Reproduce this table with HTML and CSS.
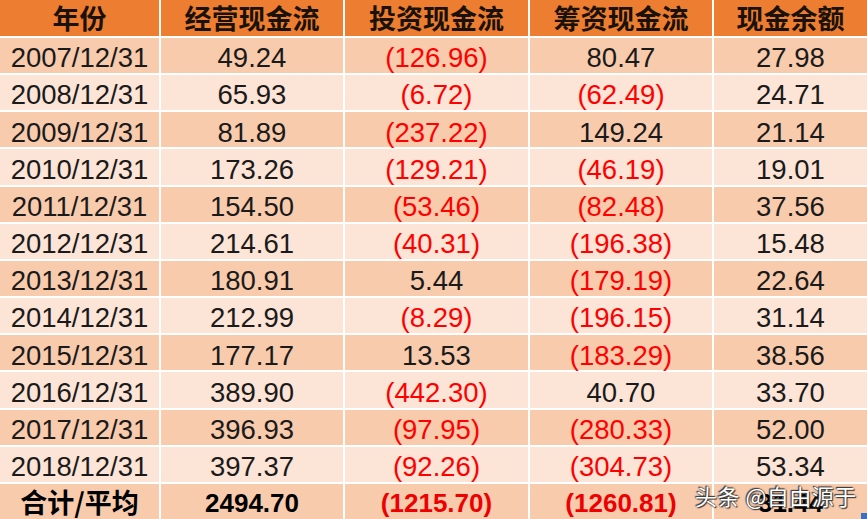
FILE: index.html
```html
<!DOCTYPE html>
<html lang="zh">
<head>
<meta charset="utf-8">
<link rel="stylesheet" href="styles.css">
</head>
<body>
<div class="sheet">
  <div class="grid">
    <div class="c h">年份</div><div class="c h">经营现金流</div><div class="c h">投资现金流</div><div class="c h">筹资现金流</div><div class="c h">现金余额</div>

    <div class="c d">2007/12/31</div><div class="c d">49.24</div><div class="c d neg">(126.96)</div><div class="c d">80.47</div><div class="c d">27.98</div>
    <div class="c l">2008/12/31</div><div class="c l">65.93</div><div class="c l neg">(6.72)</div><div class="c l neg">(62.49)</div><div class="c l">24.71</div>
    <div class="c d">2009/12/31</div><div class="c d">81.89</div><div class="c d neg">(237.22)</div><div class="c d">149.24</div><div class="c d">21.14</div>
    <div class="c l">2010/12/31</div><div class="c l">173.26</div><div class="c l neg">(129.21)</div><div class="c l neg">(46.19)</div><div class="c l">19.01</div>
    <div class="c d">2011/12/31</div><div class="c d">154.50</div><div class="c d neg">(53.46)</div><div class="c d neg">(82.48)</div><div class="c d">37.56</div>
    <div class="c l">2012/12/31</div><div class="c l">214.61</div><div class="c l neg">(40.31)</div><div class="c l neg">(196.38)</div><div class="c l">15.48</div>
    <div class="c d">2013/12/31</div><div class="c d">180.91</div><div class="c d">5.44</div><div class="c d neg">(179.19)</div><div class="c d">22.64</div>
    <div class="c l">2014/12/31</div><div class="c l">212.99</div><div class="c l neg">(8.29)</div><div class="c l neg">(196.15)</div><div class="c l">31.14</div>
    <div class="c d">2015/12/31</div><div class="c d">177.17</div><div class="c d">13.53</div><div class="c d neg">(183.29)</div><div class="c d">38.56</div>
    <div class="c l">2016/12/31</div><div class="c l">389.90</div><div class="c l neg">(442.30)</div><div class="c l">40.70</div><div class="c l">33.70</div>
    <div class="c d">2017/12/31</div><div class="c d">396.93</div><div class="c d neg">(97.95)</div><div class="c d neg">(280.33)</div><div class="c d">52.00</div>
    <div class="c l">2018/12/31</div><div class="c l">397.37</div><div class="c l neg">(92.26)</div><div class="c l neg">(304.73)</div><div class="c l">53.34</div>

    <div class="c d t cjk">合计/平均</div><div class="c d t">2494.70</div><div class="c d t neg">(1215.70)</div><div class="c d t neg">(1260.81)</div><div class="c d t">31.44</div>
  </div>
  <div class="mark">头条 @自由源于</div>
  <div class="corner"></div>
</div>
</body>
</html>
```

FILE: styles.css
```css
html, body {
  margin: 0;
  padding: 0;
  background: #ffffff;
}
.sheet {
  position: relative;
  width: 867px;
  height: 519px;
  overflow: hidden;
}
.grid {
  display: grid;
  grid-template-columns: 159px 182px 183px 182px 1fr;
  grid-template-rows: 36px repeat(13, minmax(0, 1fr));
  column-gap: 2px;
  row-gap: 2px;
  height: 519px;
  background: #ffffff;
}
.c {
  display: flex;
  align-items: center;
  justify-content: center;
  font-family: "Liberation Sans", Arial, "Noto Sans CJK SC", sans-serif;
  font-size: 27.5px;
  line-height: 1;
  color: #1a1a1a;
  white-space: nowrap;
  padding-top: 5px;
  box-sizing: border-box;
  min-height: 0;
}
.h {
  background: #ED7D31;
  font-family: "Noto Sans CJK SC", sans-serif;
  font-weight: 700;
  font-size: 27px;
  line-height: 36px;
  color: #1a1208;
  padding-top: 0;
}
.d { background: #F8CBAD; }
.l { background: #FCE4D6; }
.neg { color: #FF0000; }
.t {
  font-weight: 700;
  font-size: 26px;
  color: #000000;
  padding-top: 4px;
}
.cjk {
  font-family: "Noto Sans CJK SC", sans-serif;
  font-size: 27px;
  padding-top: 0;
}
.t.neg { color: #EE0000; }
.mark {
  position: absolute;
  left: 695px;
  top: 479px;
  font-family: "Noto Sans CJK SC", sans-serif;
  font-size: 22px;
  letter-spacing: 0.5px;
  color: #ffffff;
  text-shadow: 0 0 2px #333333, 1px 1px 1px #333333, -1px -1px 1px #333333;
}
.corner {
  position: absolute;
  right: 0;
  bottom: 0;
  width: 6px;
  height: 6px;
  background: #3b6fc4;
}
```
